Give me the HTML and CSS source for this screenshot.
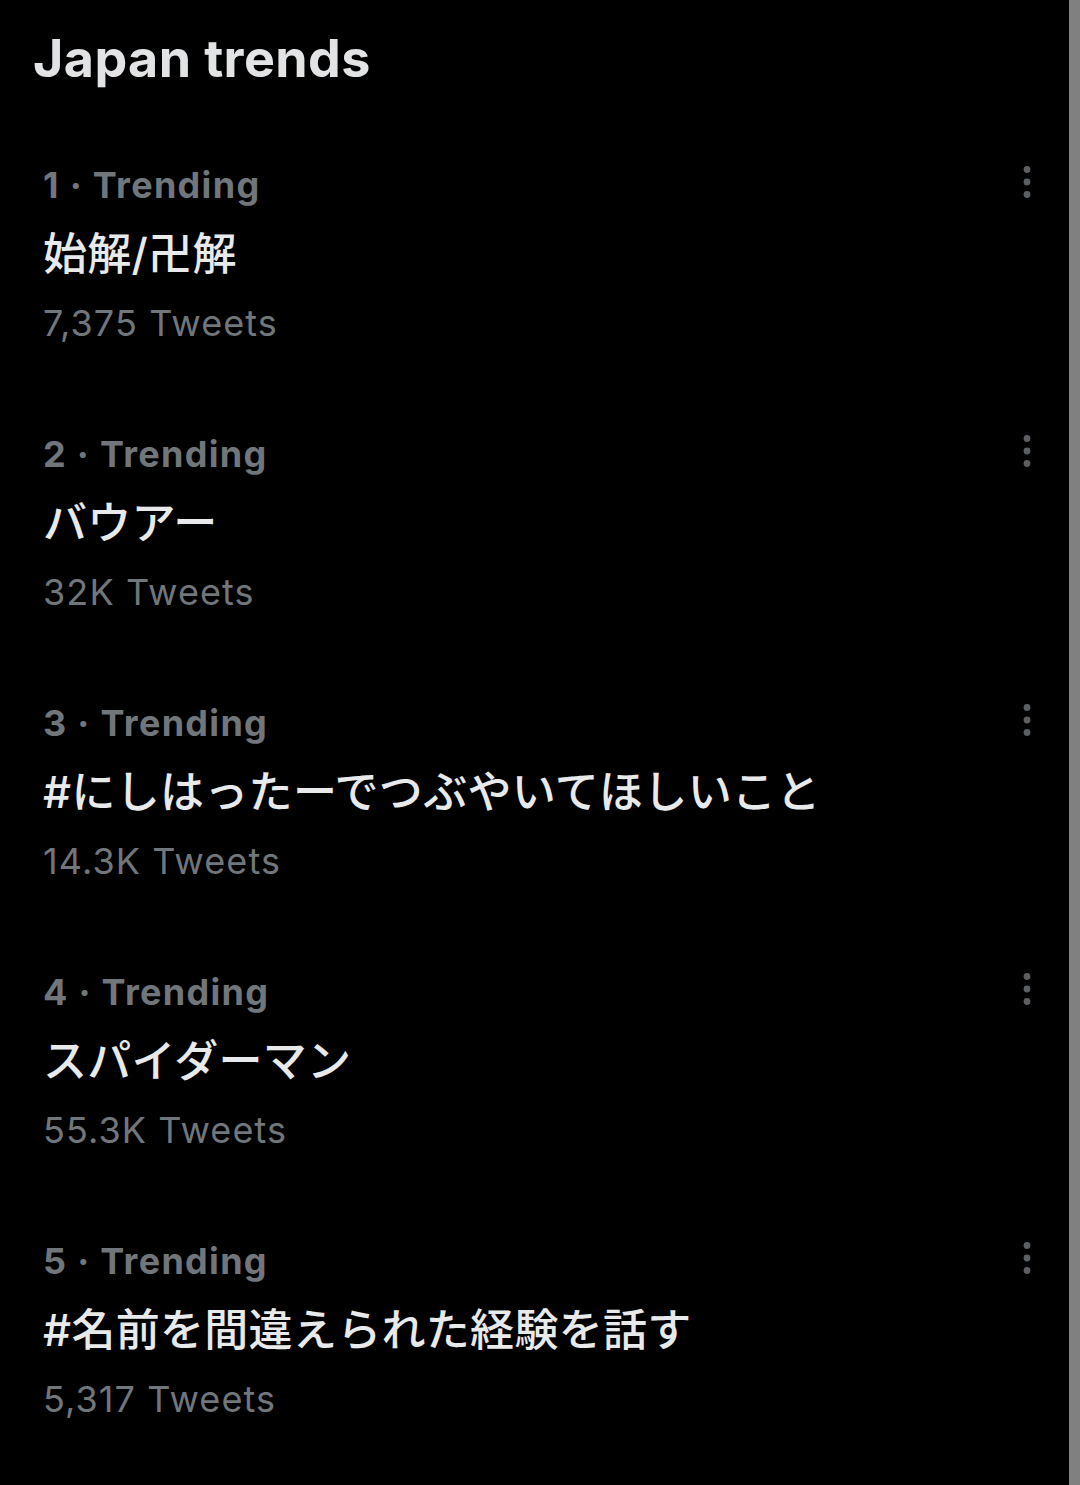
FILE: index.html
```html
<!DOCTYPE html>
<html lang="ja">
<head>
<meta charset="utf-8">
<title>Japan trends</title>
<link rel="stylesheet" href="styles.css">
</head>
<body>
<div class="page">
  <main class="panel">
    <h1 class="title">Japan trends</h1>
    <ul class="trends">
      <li class="trend">
        <div class="info">
          <div class="meta">1 · Trending</div>
          <div class="name">始解/卍解</div>
          <div class="count">7,375 Tweets</div>
        </div>
        <svg class="more" viewBox="0 0 24 40" aria-hidden="true"><circle cx="12" cy="7.5" r="3.4"/><circle cx="12" cy="20" r="3.4"/><circle cx="12" cy="32.5" r="3.4"/></svg>
      </li>
      <li class="trend">
        <div class="info">
          <div class="meta">2 · Trending</div>
          <div class="name">バウアー</div>
          <div class="count">32K Tweets</div>
        </div>
        <svg class="more" viewBox="0 0 24 40" aria-hidden="true"><circle cx="12" cy="7.5" r="3.4"/><circle cx="12" cy="20" r="3.4"/><circle cx="12" cy="32.5" r="3.4"/></svg>
      </li>
      <li class="trend">
        <div class="info">
          <div class="meta">3 · Trending</div>
          <div class="name">#にしはったーでつぶやいてほしいこと</div>
          <div class="count">14.3K Tweets</div>
        </div>
        <svg class="more" viewBox="0 0 24 40" aria-hidden="true"><circle cx="12" cy="7.5" r="3.4"/><circle cx="12" cy="20" r="3.4"/><circle cx="12" cy="32.5" r="3.4"/></svg>
      </li>
      <li class="trend">
        <div class="info">
          <div class="meta">4 · Trending</div>
          <div class="name">スパイダーマン</div>
          <div class="count">55.3K Tweets</div>
        </div>
        <svg class="more" viewBox="0 0 24 40" aria-hidden="true"><circle cx="12" cy="7.5" r="3.4"/><circle cx="12" cy="20" r="3.4"/><circle cx="12" cy="32.5" r="3.4"/></svg>
      </li>
      <li class="trend">
        <div class="info">
          <div class="meta">5 · Trending</div>
          <div class="name">#名前を間違えられた経験を話す</div>
          <div class="count">5,317 Tweets</div>
        </div>
        <svg class="more" viewBox="0 0 24 40" aria-hidden="true"><circle cx="12" cy="7.5" r="3.4"/><circle cx="12" cy="20" r="3.4"/><circle cx="12" cy="32.5" r="3.4"/></svg>
      </li>
    </ul>
  </main>
  <div class="scrollbar"></div>
</div>
</body>
</html>
```

FILE: styles.css
```css
html, body {
  margin: 0;
  padding: 0;
  background: #000;
}

body {
  font-family: Inter, "Noto Sans CJK JP", sans-serif;
  color: #e7e9ea;
}

.page {
  display: flex;
  height: 1485px;
}

.panel {
  flex: 1;
  min-width: 0;
}

.scrollbar {
  width: 11px;
  background: #808080;
}

.title {
  margin: 0;
  padding: 26px 0 0 33px;
  height: 94px;
  font-size: 52px;
  line-height: 66px;
  font-weight: 700;
  color: #e2e3e4;
  letter-spacing: 0.4px;
}

.trends {
  list-style: none;
  margin: 0;
  padding: 0;
}

.trend {
  display: flex;
  align-items: flex-start;
  padding: 31px 30px 31px 43px;
  height: 207px;
}

.info {
  flex: 1;
  min-width: 0;
}

.meta,
.name,
.count {
  line-height: 69px;
  white-space: nowrap;
}

.meta {
  font-size: 36px;
  font-weight: 700;
  color: #71767b;
  letter-spacing: 1.3px;
}

.name {
  font-family: Inter, "Noto Sans CJK JP", sans-serif;
  font-size: 44px;
  font-weight: 500;
  color: #e7e9ea;
  letter-spacing: 0.3px;
}

.count {
  font-size: 36px;
  font-weight: 400;
  color: #71767b;
  letter-spacing: 1.1px;
}

.more {
  width: 24px;
  height: 40px;
  margin-top: 11px;
  fill: #5c5f62;
  flex: none;
}
```
